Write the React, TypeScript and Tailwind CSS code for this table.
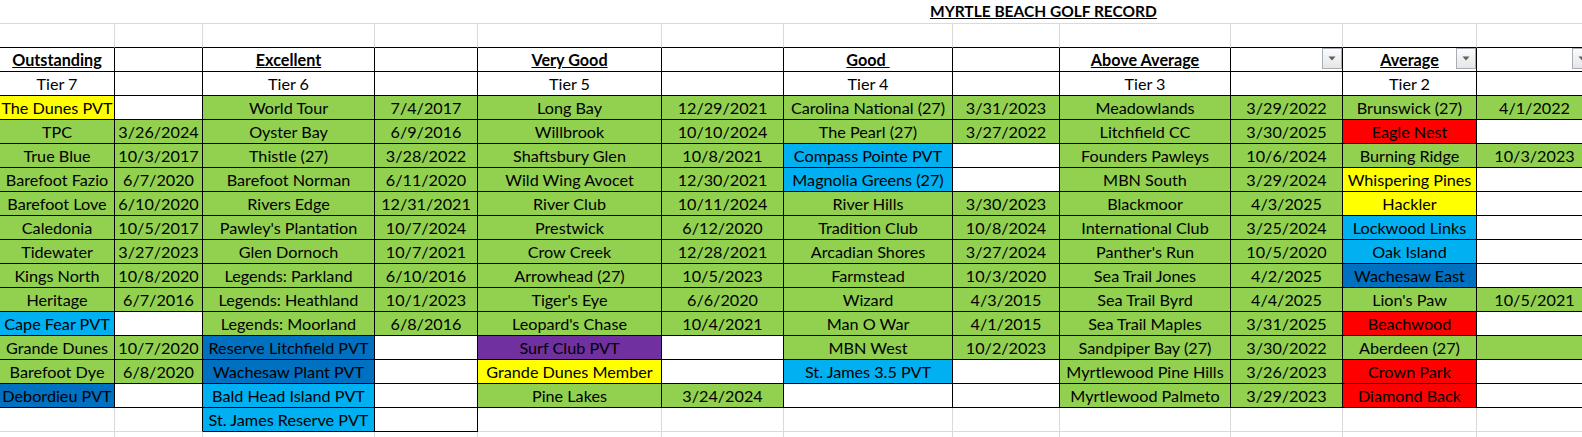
import React from 'react';

const COLS = [115, 88, 172, 103, 184, 122, 169, 107, 171, 112, 134, 116];

const BG: Record<string, string> = {
  g: 'bg-[#92d050]',
  y: 'bg-[#ffff00]',
  b: 'bg-[#00b0f0]',
  d: 'bg-[#0070c0]',
  p: 'bg-[#7030a0]',
  r: 'bg-[#ff0000]',
  w: 'bg-white',
  n: 'bg-white',
};

const HEADERS = ['Outstanding', '', 'Excellent', '', 'Very Good', '', 'Good\u00a0', '', 'Above Average', '', 'Average', ''];
const TIERS = ['Tier 7', '', 'Tier 6', '', 'Tier 5', '', 'Tier 4', '', 'Tier 3', '', 'Tier 2', ''];
// columns with a filter button in the header row
const FILTERS = [9, 10, 11];

const DATA: string[][] = [
  ['y:The Dunes PVT', 'w:', 'g:World Tour', 'g:7/4/2017', 'g:Long Bay', 'g:12/29/2021', 'g:Carolina National (27)', 'g:3/31/2023', 'g:Meadowlands', 'g:3/29/2022', 'g:Brunswick (27)', 'g:4/1/2022'],
  ['g:TPC', 'g:3/26/2024', 'g:Oyster Bay', 'g:6/9/2016', 'g:Willbrook', 'g:10/10/2024', 'g:The Pearl (27)', 'g:3/27/2022', 'g:Litchfield CC', 'g:3/30/2025', 'r:Eagle Nest', 'w:'],
  ['g:True Blue', 'g:10/3/2017', 'g:Thistle (27)', 'g:3/28/2022', 'g:Shaftsbury Glen', 'g:10/8/2021', 'b:Compass Pointe PVT', 'w:', 'g:Founders Pawleys', 'g:10/6/2024', 'g:Burning Ridge', 'g:10/3/2023'],
  ['g:Barefoot Fazio', 'g:6/7/2020', 'g:Barefoot Norman', 'g:6/11/2020', 'g:Wild Wing Avocet', 'g:12/30/2021', 'b:Magnolia Greens (27)', 'w:', 'g:MBN South', 'g:3/29/2024', 'y:Whispering Pines', 'w:'],
  ['g:Barefoot Love', 'g:6/10/2020', 'g:Rivers Edge', 'g:12/31/2021', 'g:River Club', 'g:10/11/2024', 'g:River Hills', 'g:3/30/2023', 'g:Blackmoor', 'g:4/3/2025', 'y:Hackler', 'w:'],
  ['g:Caledonia', 'g:10/5/2017', "g:Pawley's Plantation", 'g:10/7/2024', 'g:Prestwick', 'g:6/12/2020', 'g:Tradition Club', 'g:10/8/2024', 'g:International Club', 'g:3/25/2024', 'b:Lockwood Links', 'w:'],
  ['g:Tidewater', 'g:3/27/2023', 'g:Glen Dornoch', 'g:10/7/2021', 'g:Crow Creek', 'g:12/28/2021', 'g:Arcadian Shores', 'g:3/27/2024', "g:Panther's Run", 'g:10/5/2020', 'b:Oak Island', 'w:'],
  ['g:Kings North', 'g:10/8/2020', 'g:Legends: Parkland', 'g:6/10/2016', 'g:Arrowhead (27)', 'g:10/5/2023', 'g:Farmstead', 'g:10/3/2020', 'g:Sea Trail Jones', 'g:4/2/2025', 'd:Wachesaw East', 'w:'],
  ['g:Heritage', 'g:6/7/2016', 'g:Legends: Heathland', 'g:10/1/2023', "g:Tiger's Eye", 'g:6/6/2020', 'g:Wizard', 'g:4/3/2015', 'g:Sea Trail Byrd', 'g:4/4/2025', "g:Lion's Paw", 'g:10/5/2021'],
  ['b:Cape Fear PVT', 'w:', 'g:Legends: Moorland', 'g:6/8/2016', "g:Leopard's Chase", 'g:10/4/2021', 'g:Man O War', 'g:4/1/2015', 'g:Sea Trail Maples', 'g:3/31/2025', 'r:Beachwood', 'w:'],
  ['g:Grande Dunes', 'g:10/7/2020', 'd:Reserve Litchfield PVT', 'w:', 'p:Surf Club PVT', 'w:', 'g:MBN West', 'g:10/2/2023', 'g:Sandpiper Bay (27)', 'g:3/30/2022', 'g:Aberdeen (27)', 'g:'],
  ['g:Barefoot Dye', 'g:6/8/2020', 'd:Wachesaw Plant PVT', 'w:', 'y:Grande Dunes Member', 'w:', 'b:St. James 3.5 PVT', 'w:', 'g:Myrtlewood Pine Hills', 'g:3/26/2023', 'r:Crown Park', 'w:'],
  ['d:Debordieu PVT', 'w:', 'b:Bald Head Island PVT', 'w:', 'g:Pine Lakes', 'g:3/24/2024', 'w:', 'w:', 'g:Myrtlewood Palmeto', 'g:3/29/2023', 'r:Diamond Back', 'w:'],
  ['n:', 'n:', 'b:St. James Reserve PVT', 'w:', 'n:', 'n:', 'n:', 'n:', 'n:', 'n:', 'n:', 'n:'],
  ['n:', 'n:', 'n:', 'n:', 'n:', 'n:', 'n:', 'n:', 'n:', 'n:', 'n:', 'n:'],
];

// grid rows: 0 blank, 1 headers, 2 tiers, 3.. data
const ROWS: { kind: 'blank' | 'head' | 'tier' | 'data'; cells: string[] }[] = [
  { kind: 'blank', cells: COLS.map(() => 'n:') },
  { kind: 'head', cells: HEADERS.map((h) => 'w:' + h) },
  { kind: 'tier', cells: TIERS.map((t) => 'w:' + t) },
  ...DATA.map((cells) => ({ kind: 'data' as const, cells })),
];

const bordered = (r: number, c: number) => {
  if (r < 0 || c >= COLS.length) return false;
  if (r >= 1 && r <= 15) return true;
  if (r === 16 && (c === 2 || c === 3)) return true;
  return false;
};

const FilterButton = () => (
  <div className="absolute right-0 top-0 w-[20px] h-[21px] border border-[#a7adb5] bg-gradient-to-b from-[#fbfbfb] to-[#e6e6e6] flex items-center justify-center">
    <svg width="8" height="5" viewBox="0 0 8 5">
      <path d="M0.5 0.5 L7.5 0.5 L4 4.5 Z" fill="#5b5f64" />
    </svg>
  </div>
);

export default function App() {
  return (
    <div className="w-[1582px] h-[437px] overflow-hidden bg-white text-black font-['Lato',sans-serif] text-[16.2px] leading-none">
      {/* title row */}
      <div className="h-[24px] border-b border-[#dadada] pl-[930px] flex items-center">
        <span className="font-bold underline text-[15.5px]">MYRTLE BEACH GOLF RECORD</span>
      </div>

      <div className="grid" style={{ gridTemplateColumns: COLS.map((w) => w + 'px').join(' ') }}>
        {ROWS.map((row, r) =>
          row.cells.map((raw, c) => {
            const [key, ...rest] = raw.split(':');
            const text = rest.join(':');
            const right = bordered(r, c) || bordered(r, c + 1) ? 'border-r-black' : 'border-r-[#dadada]';
            const bottom = bordered(r, c) || bordered(r + 1, c) ? 'border-b-black' : 'border-b-[#dadada]';
            return (
              <div
                key={r + '-' + c}
                className={`relative h-[24px] border-r border-b ${right} ${bottom} ${BG[key]} flex items-center justify-center whitespace-nowrap overflow-visible pt-[2px]`}
              >
                {row.kind === 'head' ? (
                  <span className="font-bold underline">{text}</span>
                ) : (
                  <span>{text}</span>
                )}
                {row.kind === 'head' && FILTERS.includes(c) && <FilterButton />}
              </div>
            );
          })
        )}
      </div>
    </div>
  );
}
